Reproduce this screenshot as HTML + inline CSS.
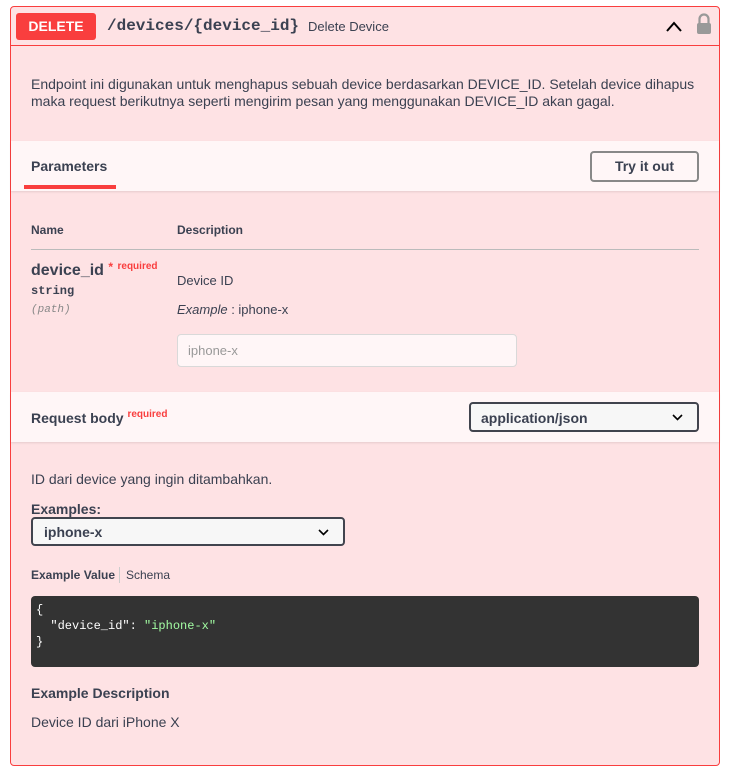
<!DOCTYPE html>
<html><head><style>
*{box-sizing:border-box;margin:0;padding:0}
body{width:732px;height:742px;background:#fff;font-family:"Liberation Sans",sans-serif;color:#3b4151;overflow:hidden}
.op{position:absolute;left:10px;top:6px;width:710px;height:760px;border:1px solid #f93e3e;border-radius:4px;background:#fee2e4}
.hdr{position:absolute;left:0;top:0;width:708px;height:39px;border-bottom:1px solid #f93e3e}
.badge{position:absolute;left:5px;top:6px;width:80px;height:27px;background:#f93e3e;color:#fff;font-weight:bold;font-size:14px;text-align:center;line-height:27px;border-radius:3px}
.path{position:absolute;left:96px;top:10px;font-family:"Liberation Mono",monospace;font-weight:bold;font-size:16px}
.sum{position:absolute;left:297px;top:12px;font-size:13px}
.desc{position:absolute;left:20px;top:69px;font-size:14px;line-height:17px;width:680px}
.bar{position:absolute;left:0;width:708px;background:#fff6f7;box-shadow:0 1px 2px rgba(0,0,0,.1)}
.btn{position:absolute;border:2px solid #888;border-radius:4px;font-weight:bold;font-size:14px;background:#fff6f7}
.t{position:absolute;white-space:nowrap}
</style></head><body>
<div class="op">
<div class="hdr">
<div class="badge">DELETE</div>
<div class="path">/devices/{device_id}</div>
<div class="sum">Delete Device</div>
<svg style="position:absolute;left:654px;top:12px" width="18" height="14" viewBox="0 0 18 14"><path d="M2 12 L9 4 L16 12" fill="none" stroke="#000" stroke-width="2"/></svg>
<svg style="position:absolute;left:685px;top:6px" width="16" height="22" viewBox="0 0 16 22"><path d="M3.5 11 V6 a4.5 4.5 0 0 1 9 0 V11" fill="none" stroke="#999" stroke-width="2.2"/><rect x="1" y="10" width="14" height="11" rx="2" fill="#999"/></svg>
</div>
<div class="desc">Endpoint ini digunakan untuk menghapus sebuah device berdasarkan DEVICE_ID. Setelah device dihapus maka request berikutnya seperti mengirim pesan yang menggunakan DEVICE_ID akan gagal.</div>
<div class="bar" style="top:134px;height:50px">
<div class="t" style="left:20px;top:17px;font-weight:bold;font-size:14px">Parameters</div>
<div style="position:absolute;left:13px;top:44px;width:92px;height:4px;background:#f93e3e"></div>
<div class="btn" style="left:579px;top:10px;width:109px;height:31px;text-align:center;line-height:27px">Try it out</div>
</div>
<div class="t" style="left:20px;top:216px;font-size:12px;font-weight:bold">Name</div>
<div class="t" style="left:166px;top:216px;font-size:12px;font-weight:bold">Description</div>
<div style="position:absolute;left:20px;top:242px;width:668px;height:1px;background:#bbb"></div>
<div class="t" style="left:20px;top:253px;font-size:16px;font-weight:bold">device_id <span style="color:#f93e3e;font-size:12px;vertical-align:4px">*</span> <span style="color:#f93e3e;font-size:10px;vertical-align:6px">required</span></div>
<div class="t" style="left:20px;top:277px;font-size:12px;font-family:'Liberation Mono',monospace;font-weight:bold">string</div>
<div class="t" style="left:20px;top:297px;font-size:11px;font-family:'Liberation Mono',monospace;font-style:italic;color:#888">(path)</div>
<div class="t" style="left:166px;top:266px;font-size:13px">Device ID</div>
<div class="t" style="left:166px;top:295px;font-size:13px"><i>Example</i> : iphone-x</div>
<div style="position:absolute;left:166px;top:327px;width:340px;height:33px;border:1px solid #d9d9d9;border-radius:4px;background:#fff6f7;font-size:13px;color:#999;padding:8px 10px">iphone-x</div>
<div class="bar" style="top:385px;height:50px">
<div class="t" style="left:20px;top:17px;font-weight:bold;font-size:14px">Request body <span style="color:#f93e3e;font-size:10px;vertical-align:6px">required</span></div>
<div class="btn" style="left:458px;top:10px;width:230px;height:30px;padding:6px 10px;border-color:#41444e;background:#f7f7f7">application/json<svg style="position:absolute;right:14px;top:10px" width="11" height="7" viewBox="0 0 11 7"><path d="M1 1 L5.5 5.5 L10 1" fill="none" stroke="#000" stroke-width="1.6"/></svg></div>
</div>
<div class="t" style="left:20px;top:464px;font-size:14px">ID dari device yang ingin ditambahkan.</div>
<div class="t" style="left:20px;top:494px;font-size:14px;font-weight:bold">Examples:</div>
<div class="btn" style="left:20px;top:510px;width:314px;height:29px;padding:5px 11px;border-color:#41444e;background:#f7f7f7">iphone-x<svg style="position:absolute;right:14px;top:10px" width="11" height="7" viewBox="0 0 11 7"><path d="M1 1 L5.5 5.5 L10 1" fill="none" stroke="#000" stroke-width="1.6"/></svg></div>
<div class="t" style="left:20px;top:561px;font-size:12px;font-weight:bold">Example Value</div>
<div style="position:absolute;left:108px;top:560px;width:1px;height:16px;background:#ccc"></div>
<div class="t" style="left:115px;top:561px;font-size:12px">Schema</div>
<div style="position:absolute;left:20px;top:589px;width:668px;height:71px;background:#333;border-radius:4px;color:#fff;font-family:'Liberation Mono',monospace;font-size:12px;line-height:16px;padding:6px 5px;white-space:pre">{
  "device_id": <span style="color:#a2fca2">"iphone-x"</span>
}</div>
<div class="t" style="left:20px;top:678px;font-size:14px;font-weight:bold">Example Description</div>
<div class="t" style="left:20px;top:707px;font-size:14px">Device ID dari iPhone X</div>
</div>
</body></html>
